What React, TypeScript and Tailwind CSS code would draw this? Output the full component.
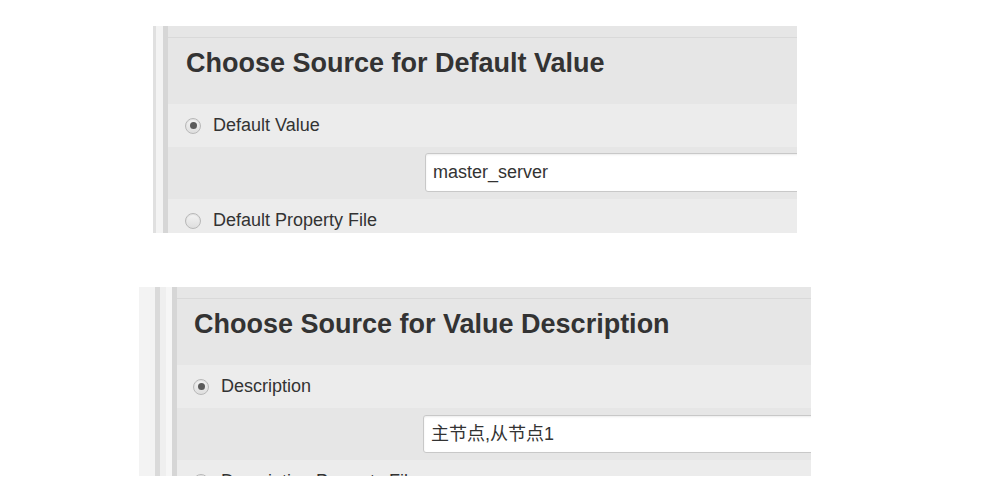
const font = { fontFamily: '"Liberation Sans", Arial, "Noto Sans CJK SC", sans-serif' };

function Radio({ checked }: { checked?: boolean }) {
  return (
    <span className="flex h-[16px] w-[16px] shrink-0 items-center justify-center rounded-full border border-[#b8b8b8] bg-gradient-to-b from-[#f4f4f4] to-[#dedede] shadow-[inset_0_1px_1px_rgba(0,0,0,0.08)]">
      {checked && <span className="h-[7px] w-[7px] rounded-full bg-[#5a5a5a]" />}
    </span>
  );
}

type PanelProps = {
  title: string;
  first: string;
  second: string;
  value: string;
  stripes: { w: string; bg: string }[];
  width: string;
  height: string;
  padX: string;
  radioX: string;
  inputX: string;
  inputTop: string;
  inputH: string;
};

function Panel(p: PanelProps) {
  return (
    <div className={`flex overflow-hidden ${p.width} ${p.height}`} style={font}>
      {p.stripes.map((s, i) => (
        <div key={i} className={`shrink-0 ${s.w} ${s.bg}`} />
      ))}
      <div className="flex min-w-0 flex-1 flex-col text-[#333]">
        <div className="h-[11px] shrink-0 bg-[#e6e6e6]" />
        <div className="h-px shrink-0 bg-[#d9d9d9]" />
        <div className={`h-[66px] shrink-0 bg-[#e6e6e6] pt-[10px] ${p.padX}`}>
          <h2 className="whitespace-nowrap text-[27px] font-bold leading-[31px]">{p.title}</h2>
        </div>
        <div className={`h-[43px] shrink-0 bg-[#ececec] pt-[11px] ${p.radioX}`}>
          <label className="flex h-[21px] items-center gap-[12px] text-[18px] leading-[21px]">
            <Radio checked />
            {p.first}
          </label>
        </div>
        <div className={`h-[52px] shrink-0 bg-[#e6e6e6] ${p.inputTop} ${p.inputX}`}>
          <div
            className={`flex w-[600px] items-center rounded-[3px] border border-[#c8c8c8] bg-white pl-[7px] text-[18px] shadow-[inset_0_1px_2px_rgba(0,0,0,0.08)] ${p.inputH}`}
          >
            {p.value}
          </div>
        </div>
        <div className={`flex-1 bg-[#ececec] pt-[11px] ${p.radioX}`}>
          <label className="flex h-[21px] items-center gap-[12px] text-[18px] leading-[21px]">
            <Radio />
            {p.second}
          </label>
        </div>
      </div>
    </div>
  );
}

export default function App() {
  return (
    <div className="h-[486px] w-[986px] overflow-hidden bg-white">
      <div className="pl-[153px] pt-[26px]">
        <Panel
          title="Choose Source for Default Value"
          first="Default Value"
          second="Default Property File"
          value="master_server"
          width="w-[644px]"
          height="h-[207px]"
          padX="pl-[18px]"
          radioX="pl-[17px]"
          inputX="pl-[257px]"
          inputTop="pt-[6px]"
          inputH="h-[39px]"
          stripes={[
            { w: "w-[3px]", bg: "bg-[#e0e0e0]" },
            { w: "w-[7px]", bg: "bg-[#f3f3f3]" },
            { w: "w-[5px]", bg: "bg-[#d6d6d6]" },
          ]}
        />
      </div>
      <div className="pl-[139px] pt-[54px]">
        <Panel
          title="Choose Source for Value Description"
          first="Description"
          second="Description Property File"
          value="主节点,从节点1"
          width="w-[672px]"
          height="h-[189px]"
          padX="pl-[17px]"
          radioX="pl-[16px]"
          inputX="pl-[246px]"
          inputTop="pt-[7px]"
          inputH="h-[38px]"
          stripes={[
            { w: "w-[16px]", bg: "bg-[#f3f3f3]" },
            { w: "w-[5px]", bg: "bg-[#dadada]" },
            { w: "w-[6px]", bg: "bg-[#efefef]" },
            { w: "w-[6px]", bg: "bg-[#f6f6f6]" },
            { w: "w-[5px]", bg: "bg-[#d6d6d6]" },
          ]}
        />
      </div>
    </div>
  );
}
